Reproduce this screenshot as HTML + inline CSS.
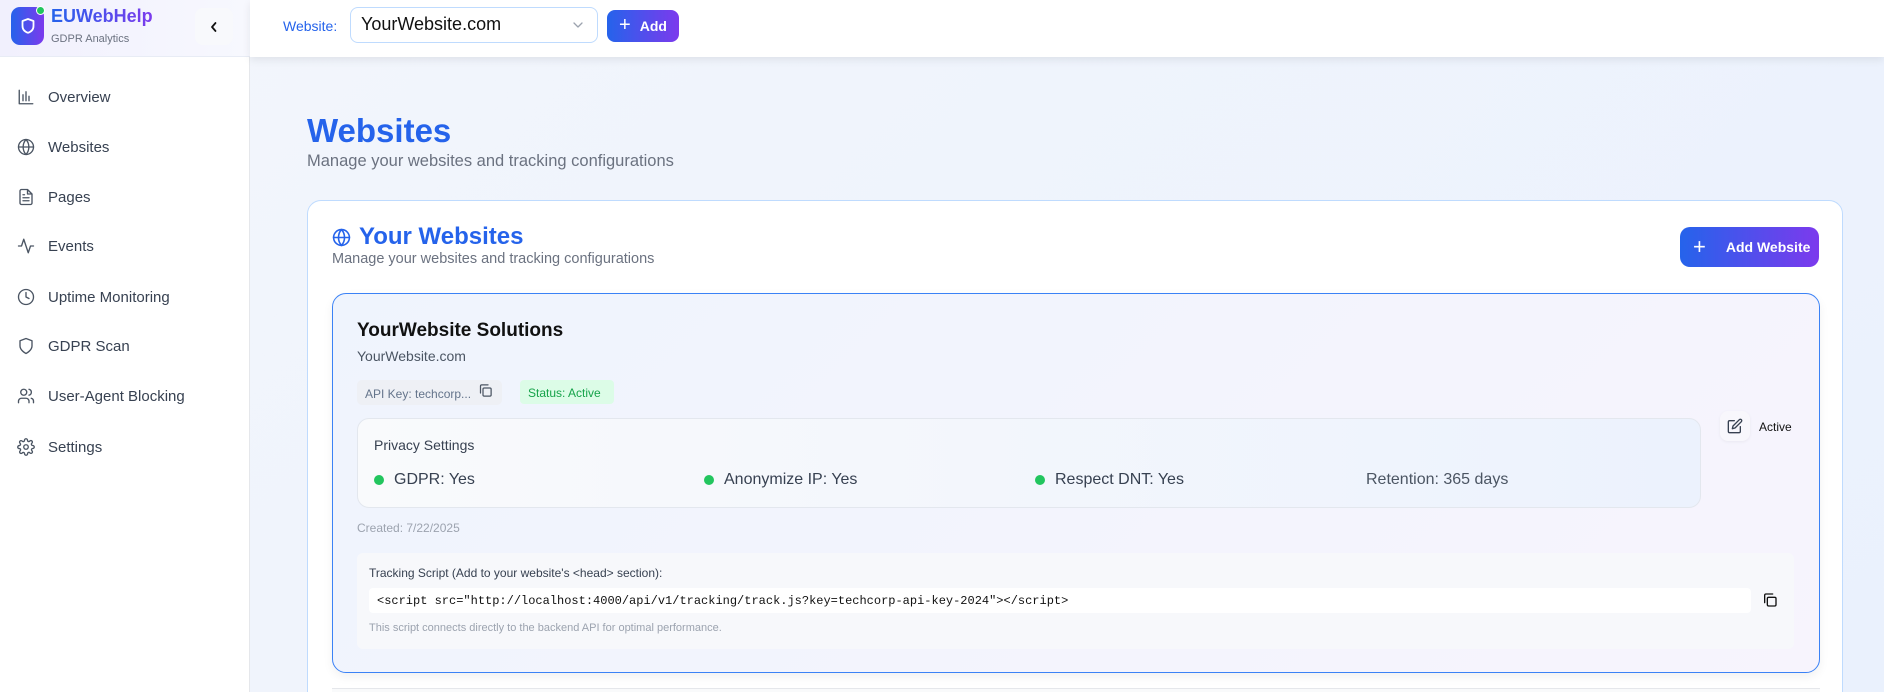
<!DOCTYPE html>
<html style="width:1884px;height:692px;overflow:hidden"><head><meta charset="utf-8"><style>
*{box-sizing:border-box;margin:0;padding:0}
body{width:1884px;height:692px;overflow:hidden;font-family:"Liberation Sans",sans-serif;background:linear-gradient(135deg,#f3f6fc,#eaf1fd);position:relative;color:#1f2937}
.abs{position:absolute}
.side{left:0;top:0;width:250px;height:692px;background:#fff;border-right:1px solid #e5e7eb}
.logo{left:0;top:0;width:250px;height:57px;background:linear-gradient(90deg,#f1f0fd,#f7f8fe);border-bottom:1px solid #e8ecf5}
.nav{left:17px;font-size:15px;color:#374151;display:flex;align-items:center;gap:13px;height:20px}
.nav svg{width:18px;height:18px;stroke:#4b5563;fill:none;stroke-width:1.8;stroke-linecap:round;stroke-linejoin:round}
.hdr{left:250px;top:0;width:1634px;height:57px;background:#fff;box-shadow:0 3px 8px rgba(0,0,0,.08)}
.grad{background:linear-gradient(90deg,#2563eb,#7c3aed);color:#fff}
.ic{fill:none;stroke-linecap:round;stroke-linejoin:round}
</style></head><body>
<div class="abs side"></div>
<div class="abs logo"></div>
<div class="abs grad" style="left:11px;top:7px;width:33px;height:38px;border-radius:9px;display:flex;align-items:center;justify-content:center"><svg width="14" height="16" viewBox="0 0 14 16" class="ic" stroke="#fff" stroke-width="1.8"><path d="M7 1L12.5 3v5c0 3.5-2.5 5.8-5.5 6.8C4 13.8 1.5 11.5 1.5 8V3z"/></svg></div>
<div class="abs" style="left:36px;top:6px;width:9px;height:9px;border-radius:50%;background:#22c55e;border:1.5px solid #fff"></div>
<div class="abs" style="left:51px;top:6px;font-size:18px;font-weight:bold;background:linear-gradient(90deg,#2563eb,#7c3aed);-webkit-background-clip:text;color:transparent">EUWebHelp</div>
<div class="abs" style="left:51px;top:33px;font-size:11px;color:#6b7280">GDPR Analytics</div>
<div class="abs" style="left:195px;top:8px;width:38px;height:37px;border-radius:8px;background:#f8f9fc;display:flex;align-items:center;justify-content:center"><svg width="10" height="12" viewBox="0 0 10 12" class="ic" stroke="#111" stroke-width="1.8"><path d="M6.5 2L3 6l3.5 4"/></svg></div>

<div class="abs nav" style="top:87px"><svg viewBox="0 0 24 24"><path d="M3 3v18h18M8 17V9M12 17V5M16 17v-6"/></svg>Overview</div>
<div class="abs nav" style="top:137px"><svg viewBox="0 0 24 24"><circle cx="12" cy="12" r="10"/><path d="M2 12h20M12 2a15 15 0 0 1 0 20a15 15 0 0 1 0-20"/></svg>Websites</div>
<div class="abs nav" style="top:187px"><svg viewBox="0 0 24 24"><path d="M14 2H6a2 2 0 0 0-2 2v16a2 2 0 0 0 2 2h12a2 2 0 0 0 2-2V8zM14 2v6h6M8 13h8M8 17h8M8 9h2"/></svg>Pages</div>
<div class="abs nav" style="top:236px"><svg viewBox="0 0 24 24"><path d="M22 12h-4l-3 9L9 3l-3 9H2"/></svg>Events</div>
<div class="abs nav" style="top:287px"><svg viewBox="0 0 24 24"><circle cx="12" cy="12" r="10"/><path d="M12 6v6l4 2"/></svg>Uptime Monitoring</div>
<div class="abs nav" style="top:336px"><svg viewBox="0 0 24 24"><path d="M12 22s8-4 8-10V5l-8-3-8 3v7c0 6 8 10 8 10z"/></svg>GDPR Scan</div>
<div class="abs nav" style="top:386px"><svg viewBox="0 0 24 24"><path d="M16 21v-2a4 4 0 0 0-4-4H6a4 4 0 0 0-4 4v2"/><circle cx="9" cy="7" r="4"/><path d="M22 21v-2a4 4 0 0 0-3-3.9M16 3.1a4 4 0 0 1 0 7.8"/></svg>User-Agent Blocking</div>
<div class="abs nav" style="top:437px"><svg viewBox="0 0 24 24"><circle cx="12" cy="12" r="3"/><path d="M19.4 15a1.7 1.7 0 0 0 .3 1.8l.1.1a2 2 0 1 1-2.8 2.8l-.1-.1a1.7 1.7 0 0 0-1.8-.3 1.7 1.7 0 0 0-1 1.5V21a2 2 0 1 1-4 0v-.1a1.7 1.7 0 0 0-1.1-1.5 1.7 1.7 0 0 0-1.8.3l-.1.1a2 2 0 1 1-2.8-2.8l.1-.1a1.7 1.7 0 0 0 .3-1.8 1.7 1.7 0 0 0-1.5-1H3a2 2 0 1 1 0-4h.1a1.7 1.7 0 0 0 1.5-1.1 1.7 1.7 0 0 0-.3-1.8l-.1-.1a2 2 0 1 1 2.8-2.8l.1.1a1.7 1.7 0 0 0 1.8.3H9a1.7 1.7 0 0 0 1-1.5V3a2 2 0 1 1 4 0v.1a1.7 1.7 0 0 0 1 1.5 1.7 1.7 0 0 0 1.8-.3l.1-.1a2 2 0 1 1 2.8 2.8l-.1.1a1.7 1.7 0 0 0-.3 1.8V9a1.7 1.7 0 0 0 1.5 1H21a2 2 0 1 1 0 4h-.1a1.7 1.7 0 0 0-1.5 1z"/></svg>Settings</div>

<div class="abs hdr"></div>
<div class="abs" style="left:283px;top:18px;font-size:14px;color:#2563eb">Website:</div>
<div class="abs" style="left:350px;top:7px;width:248px;height:36px;border:1px solid #bfdbfe;border-radius:8px;background:#fff"></div>
<div class="abs" style="left:361px;top:14px;font-size:18px;color:#111">YourWebsite.com</div>
<svg class="abs ic" style="left:572px;top:20px" width="12" height="10" viewBox="0 0 12 10" stroke="#9ca3af" stroke-width="1.3"><path d="M2 3l4 4 4-4"/></svg>
<div class="abs grad" style="left:607px;top:10px;width:72px;height:32px;border-radius:8px;font-size:14px;font-weight:bold;display:flex;align-items:center;justify-content:center;gap:9px"><span style="font-size:20px;font-weight:normal;margin-top:-2px">+</span>Add</div>

<div class="abs" style="left:307px;top:112px;font-size:33px;font-weight:bold;color:#2563eb">Websites</div>
<div class="abs" style="left:307px;top:152px;font-size:16.5px;color:#6b7280">Manage your websites and tracking configurations</div>

<div class="abs" style="left:307px;top:200px;width:1536px;height:510px;background:#fff;border:1px solid #bfdbfe;border-radius:14px"></div>
<svg class="abs ic" style="left:332px;top:228px" width="19" height="19" viewBox="0 0 24 24" stroke="#2563eb" stroke-width="2"><circle cx="12" cy="12" r="10"/><path d="M2 12h20M12 2a15 15 0 0 1 0 20a15 15 0 0 1 0-20"/></svg>
<div class="abs" style="left:359px;top:223px;font-size:24px;font-weight:bold;color:#2563eb">Your Websites</div>
<div class="abs" style="left:332px;top:251px;font-size:14.5px;color:#6b7280">Manage your websites and tracking configurations</div>
<div class="abs grad" style="left:1680px;top:227px;width:139px;height:40px;border-radius:10px;font-size:14px;font-weight:bold;display:flex;align-items:center;gap:20px;padding-left:13px"><span style="font-size:22px;font-weight:normal;line-height:1">+</span>Add Website</div>

<div class="abs" style="left:332px;top:293px;width:1488px;height:380px;background:linear-gradient(135deg,#eff4fd,#f7f4fd);border:1.5px solid #3b82f6;border-radius:14px;box-shadow:0 4px 10px rgba(0,0,0,.06)"></div>
<div class="abs" style="left:357px;top:320px;font-size:19px;font-weight:bold;color:#111">YourWebsite Solutions</div>
<div class="abs" style="left:357px;top:348px;font-size:14px;color:#4b5563">YourWebsite.com</div>
<div class="abs" style="left:357px;top:380px;width:145px;height:25px;background:#eef0f5;border-radius:5px;font-size:12px;color:#64748b;padding:7px 0 0 8px">API Key: techcorp...</div>
<svg class="abs ic" style="left:478px;top:383px" width="15" height="15" viewBox="0 0 24 24" stroke="#4b5563" stroke-width="2"><rect x="8" y="8" width="13" height="13" rx="2"/><path d="M4 16V5a2 2 0 0 1 2-2h10"/></svg>
<div class="abs" style="left:520px;top:380px;width:94px;height:24px;background:#dcfce7;border-radius:4px;font-size:12px;color:#16a34a;padding:6px 0 0 8px">Status: Active</div>

<div class="abs" style="left:357px;top:418px;width:1344px;height:90px;background:linear-gradient(90deg,#f9fafc,#ecf2fd);border:1px solid #e3e7ee;border-radius:12px"></div>
<div class="abs" style="left:374px;top:437px;font-size:14px;color:#374151">Privacy Settings</div>
<div class="abs" style="left:374px;top:471px;font-size:16px;color:#374151;display:flex;align-items:center;gap:10px"><span style="width:10px;height:10px;border-radius:50%;background:#22c55e"></span>GDPR: Yes</div>
<div class="abs" style="left:704px;top:471px;font-size:16px;color:#374151;display:flex;align-items:center;gap:10px"><span style="width:10px;height:10px;border-radius:50%;background:#22c55e"></span>Anonymize IP: Yes</div>
<div class="abs" style="left:1035px;top:471px;font-size:16px;color:#374151;display:flex;align-items:center;gap:10px"><span style="width:10px;height:10px;border-radius:50%;background:#22c55e"></span>Respect DNT: Yes</div>
<div class="abs" style="left:1366px;top:471px;font-size:16px;color:#4b5563">Retention: 365 days</div>

<div class="abs" style="left:1720px;top:411px;width:30px;height:30px;border-radius:8px;background:#f8f7fc;box-shadow:0 1px 3px rgba(0,0,0,.05)"></div>
<svg class="abs ic" style="left:1727px;top:418px" width="16" height="16" viewBox="0 0 24 24" stroke="#374151" stroke-width="2"><path d="M11 4H4a2 2 0 0 0-2 2v14a2 2 0 0 0 2 2h14a2 2 0 0 0 2-2v-7"/><path d="M18.5 2.5a2.1 2.1 0 0 1 3 3L12 15l-4 1 1-4z"/></svg>
<div class="abs" style="left:1759px;top:420px;font-size:12px;color:#111">Active</div>

<div class="abs" style="left:357px;top:521px;font-size:12px;color:#9ca3af">Created: 7/22/2025</div>
<div class="abs" style="left:357px;top:553px;width:1437px;height:96px;background:#f7f8fb;border-radius:6px"></div>
<div class="abs" style="left:369px;top:566px;font-size:12px;color:#374151">Tracking Script (Add to your website's &lt;head&gt; section):</div>
<div class="abs" style="left:369px;top:588px;width:1382px;height:25px;background:#fff;border-radius:4px"></div>
<div class="abs" style="left:377px;top:594px;font-family:'Liberation Mono',monospace;font-size:12px;color:#111">&lt;script src="http://localhost:4000/api/v1/tracking/track.js?key=techcorp-api-key-2024"&gt;&lt;/script&gt;</div>
<svg class="abs ic" style="left:1762px;top:592px" width="16" height="16" viewBox="0 0 24 24" stroke="#111" stroke-width="2"><rect x="8" y="8" width="13" height="13" rx="2"/><path d="M4 16V5a2 2 0 0 1 2-2h10"/></svg>
<div class="abs" style="left:369px;top:622px;font-size:11px;color:#9ca3af">This script connects directly to the backend API for optimal performance.</div>
<div class="abs" style="left:332px;top:688px;width:1488px;height:4px;border-top:1px solid #e5e7eb;background:#f9fafb"></div>
</body></html>
